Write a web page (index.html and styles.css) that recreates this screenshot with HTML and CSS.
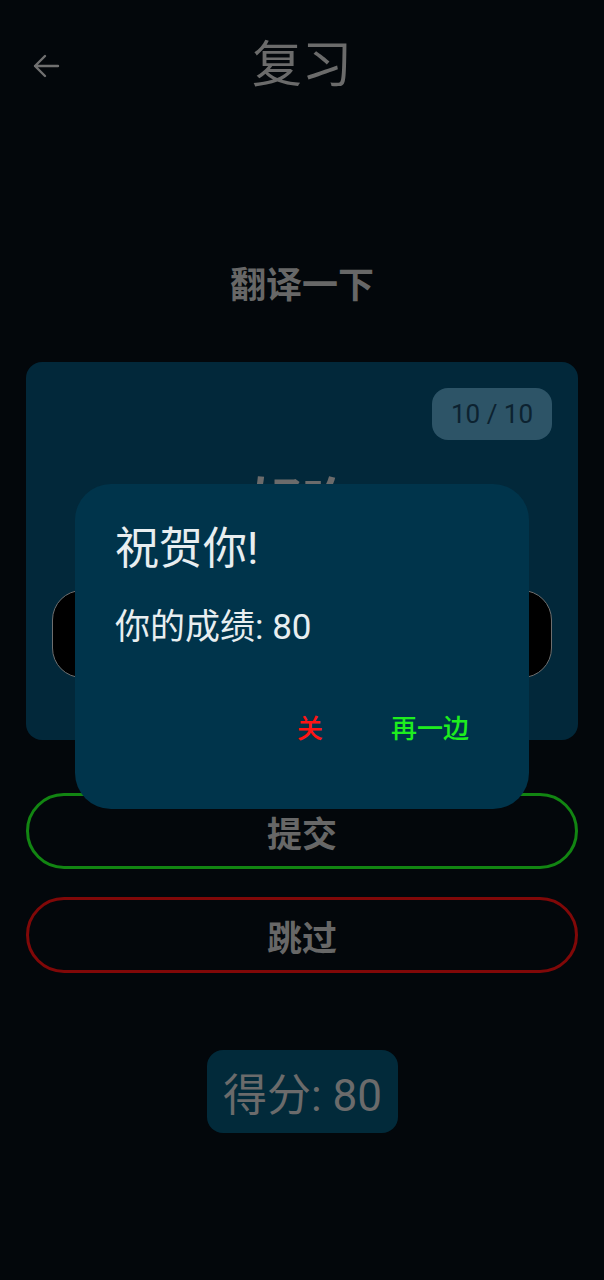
FILE: index.html
```html
<!DOCTYPE html>
<html lang="zh">
<head>
<meta charset="utf-8">
<title>复习</title>
<link rel="stylesheet" href="styles.css">
</head>
<body>
<div class="page">
  <header class="topbar">
    <button class="back" aria-label="back">
      <svg width="28" height="24" viewBox="0 0 28 24"><path d="M26 12H3M13 2L3 12l10 10" fill="none" stroke="#707070" stroke-width="2.4" stroke-linecap="round" stroke-linejoin="round"/></svg>
    </button>
    <h1 class="title">复习</h1>
  </header>

  <h2 class="prompt">翻译一下</h2>

  <section class="card">
    <div class="card-top"><span class="badge">10 / 10</span></div>
    <div class="word">好吃</div>
    <div class="input"></div>
  </section>

  <button class="btn submit">提交</button>
  <button class="btn skip">跳过</button>

  <div class="score-wrap"><div class="score">得分: 80</div></div>

  <div class="dialog">
    <div class="dlg-title">祝贺你!</div>
    <div class="dlg-body">你的成绩: 80</div>
    <div class="dlg-actions">
      <button class="act close">关</button>
      <button class="act again">再一边</button>
    </div>
  </div>
</div>
</body>
</html>
```

FILE: styles.css
```css
* { box-sizing: border-box; }
html, body {
  margin: 0;
  padding: 0;
  background: #03070b;
}
body {
  font-family: Roboto, "Noto Sans CJK SC", sans-serif;
  width: 604px;
  height: 1280px;
  overflow: hidden;
}
.page {
  position: relative;
  display: flex;
  flex-direction: column;
  height: 1280px;
}
button {
  font-family: inherit;
  background: none;
  border: none;
  padding: 0;
  cursor: pointer;
}
.topbar {
  position: relative;
  height: 130px;
  display: flex;
  align-items: center;
  justify-content: center;
}
.back {
  position: absolute;
  left: 32px;
  top: 54px;
  width: 28px;
  height: 24px;
  display: flex;
}
.title {
  margin: 0;
  font-size: 50px;
  font-weight: 400;
  color: #6b6b6b;
  line-height: 56px;
}
.prompt {
  margin: 135px 0 0;
  text-align: center;
  font-size: 36px;
  line-height: 42px;
  font-weight: 700;
  color: #676767;
}
.card {
  margin: 55px 26px 0;
  height: 378px;
  background: #02283a;
  border-radius: 16px;
  padding: 26px 26px 0;
  display: flex;
  flex-direction: column;
}
.card-top {
  display: flex;
  justify-content: flex-end;
}
.badge {
  height: 52px;
  width: 120px;
  border-radius: 16px;
  background: #2d5467;
  color: #0c2230;
  font-size: 26px;
  display: flex;
  align-items: center;
  justify-content: center;
}
.word {
  margin-top: 33px;
  text-align: center;
  font-size: 52px;
  line-height: 62px;
  font-weight: 700;
  color: #6b6b6b;
}
.input {
  margin-top: 55px;
  height: 88px;
  border: 1.5px solid #6e6e6e;
  border-radius: 30px;
  background: #000;
}
.btn {
  margin: 0 26px;
  height: 76px;
  border-radius: 38px;
  font-size: 35px;
  font-weight: 700;
  color: #676767;
  display: flex;
  align-items: center;
  justify-content: center;
}
.submit {
  margin-top: 53px;
  border: 3px solid #128512;
}
.skip {
  margin-top: 28px;
  border: 3px solid #800808;
}
.score-wrap {
  margin-top: 77px;
  display: flex;
  justify-content: center;
}
.score {
  width: 191px;
  height: 83px;
  border-radius: 16px;
  background: #022a3a;
  color: #6b6b6b;
  font-size: 44px;
  display: flex;
  align-items: center;
  justify-content: center;
  margin-left: 1px;
}
.dialog {
  position: absolute;
  left: 75px;
  top: 484px;
  width: 454px;
  height: 325px;
  border-radius: 36px;
  background: #00344b;
  padding: 37px 60px 0 40px;
  display: flex;
  flex-direction: column;
}
.dlg-title {
  font-size: 44px;
  line-height: 56px;
  color: #e8eef0;
}
.dlg-body {
  margin-top: 31px;
  font-size: 35px;
  line-height: 40px;
  color: #e8eef0;
}
.dlg-actions {
  margin-top: 65px;
  display: flex;
  justify-content: flex-end;
  align-items: center;
  gap: 68px;
}
.act {
  font-size: 26px;
  line-height: 32px;
  font-weight: 500;
}
.close { color: #ff1414; }
.again { color: #1eee1e; }
```
